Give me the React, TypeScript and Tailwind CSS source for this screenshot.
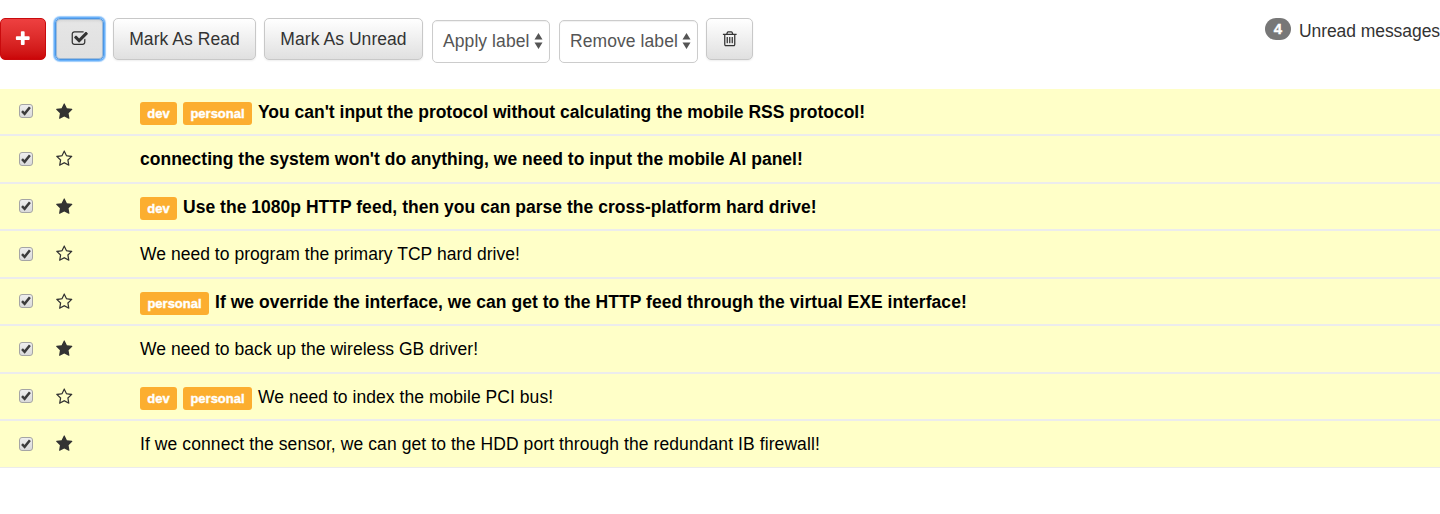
import React from "react";

const PLUS =
  "M1600 736v192q0 40-28 68t-68 28h-416v416q0 40-28 68t-68 28h-192q-40 0-68-28t-28-68v-416h-416q-40 0-68-28t-28-68v-192q0-40 28-68t68-28h416v-416q0-40 28-68t68-28h192q40 0 68 28t28 68v416h416q40 0 68 28t28 68z";
const STAR =
  "M1728 647q0 22-26 48l-363 354 86 500q1 7 1 20 0 21-10.5 35.5t-30.5 14.5q-19 0-40-12l-449-236-449 236q-22 12-40 12-21 0-31.5-14.5t-10.5-35.5q0-6 2-20l86-500-364-354q-25-27-25-48 0-37 56-46l502-73 225-455q19-41 49-41t49 41l225 455 502 73q56 9 56 46z";
const STAR_OUTLINE =
  "M1201 1004l306-297-422-62-189-382-189 382-422 62 306 297-73 421 378-199 377 199zm527-357q0 22-26 48l-363 354 86 500q1 7 1 20 0 50-41 50-19 0-40-12l-449-236-449 236q-22 12-40 12-21 0-31.5-14.5t-10.5-35.5q0-6 2-20l86-500-364-354q-25-27-25-48 0-37 56-46l502-73 225-455q19-41 49-41t49 41l225 455 502 73q56 9 56 46z";
const TRASH =
  "M704 736v576q0 14-9 23t-23 9h-64q-14 0-23-9t-9-23v-576q0-14 9-23t23-9h64q14 0 23 9t9 23zm256 0v576q0 14-9 23t-23 9h-64q-14 0-23-9t-9-23v-576q0-14 9-23t23-9h64q14 0 23 9t9 23zm256 0v576q0 14-9 23t-23 9h-64q-14 0-23-9t-9-23v-576q0-14 9-23t23-9h64q14 0 23 9t9 23zm128 724v-948h-896v948q0 22 7 40.5t14.5 27 10.5 8.5h832q3 0 10.5-8.5t14.5-27 7-40.5zm-672-1076h448l-48-117q-7-9-17-11h-317q-10 2-17 11zm928 32v64q0 14-9 23t-23 9h-96v948q0 83-47 143.5t-113 60.5h-832q-66 0-113-58.5t-47-141.5v-952h-96q-14 0-23-9t-9-23v-64q0-14 9-23t23-9h309l70-167q15-37 54-63t79-26h320q40 0 79 26t54 63l70 167h309q14 0 23 9t9 23z";
const CHECK_SQUARE =
  "M1472 930v318q0 119-84.5 203.5t-203.5 84.5h-832q-119 0-203.5-84.5t-84.5-203.5v-832q0-119 84.5-203.5t203.5-84.5h832q63 0 117 25 15 7 18 23 3 17-9 29l-49 49q-10 10-23 10-3 0-9-2-23-6-45-6h-832q-66 0-113 47t-47 113v832q0 66 47 113t113 47h832q66 0 113-47t47-113v-254q0-13 9-22l64-64q10-10 23-10 6 0 12 3 20 8 20 29zm231-489l-814 814q-24 24-57 24t-57-24l-430-430q-24-24-24-57t24-57l110-110q24-24 57-24t57 24l263 263 647-647q24-24 57-24t57 24l110 110q24 24 24 57t-24 57z";

function Icon({ d, className = "" }: { d: string; className?: string }) {
  return (
    <svg viewBox="0 0 1792 1792" className={`size-[17.5px] shrink-0 fill-current ${className}`}>
      <path d={d} />
    </svg>
  );
}

type Message = {
  text: string;
  unread?: boolean;
  starred?: boolean;
  labels: string[];
  row: string;
  tracking: string;
};

const TALL = "h-12 border-b-2";
const SHORT = "h-[47px] border-b-2";

const messages: Message[] = [
  { text: "You can't input the protocol without calculating the mobile RSS protocol!", unread: true, starred: true, labels: ["dev", "personal"], row: SHORT, tracking: "tracking-[-0.008px] pt-px" },
  { text: "connecting the system won't do anything, we need to input the mobile AI panel!", unread: true, labels: [], row: TALL, tracking: "tracking-[0.014px]" },
  { text: "Use the 1080p HTTP feed, then you can parse the cross-platform hard drive!", unread: true, starred: true, labels: ["dev"], row: SHORT, tracking: "tracking-[0.025px] pt-px" },
  { text: "We need to program the primary TCP hard drive!", labels: [], row: TALL, tracking: "tracking-[0.035px]" },
  { text: "If we override the interface, we can get to the HTTP feed through the virtual EXE interface!", unread: true, labels: ["personal"], row: SHORT, tracking: "tracking-[0.047px] pt-px" },
  { text: "We need to back up the wireless GB driver!", starred: true, labels: [], row: TALL, tracking: "tracking-[0.045px]" },
  { text: "We need to index the mobile PCI bus!", labels: ["dev", "personal"], row: SHORT, tracking: "tracking-[0.045px] pt-px" },
  { text: "If we connect the sensor, we can get to the HDD port through the redundant IB firewall!", starred: true, labels: [], row: "h-[47px] border-b", tracking: "tracking-[0.088px]" },
];

const BUTTON =
  "flex h-[42px] items-center justify-center rounded-[5px] border border-[#c8c8c8] bg-linear-to-b from-white to-[#e0e0e0] shadow-[0_1px_2px_rgba(0,0,0,0.07)]";

function SelectBox({ label, className }: { label: string; className: string }) {
  return (
    <button className={`mt-0.5 flex h-[43px] items-center justify-between rounded-[5px] border border-[#ccc] bg-white pr-1.5 pl-2.5 text-[#555] shadow-[inset_0_1px_1px_rgba(0,0,0,0.06)] ${className}`}>
      <span className="whitespace-nowrap tracking-[0.08px]">{label}</span>
      <svg viewBox="0 0 9 16" className="mb-0.5 h-4 w-[9px] fill-[#555]">
        <path d="M4.5 0L8.5 6.5H.5zM4.5 16L.5 9.5h8z" />
      </svg>
    </button>
  );
}

function Checkbox() {
  return (
    <span className="flex size-3.5 items-center justify-center rounded-[3px] border border-[#a5a5a5] bg-linear-to-b from-[#eee] to-[#dadada]">
      <svg viewBox="0 0 12 12" className="size-3 fill-none stroke-[#3c3c3c]">
        <path d="M2 6.2L4.6 8.9L9.9 2.2" strokeWidth="2.5" />
      </svg>
    </span>
  );
}

function MessageRow({ message }: { message: Message }) {
  return (
    <li className={`flex items-center border-[#ececec] bg-[#ffffc8] ${message.row}`}>
      <div className="w-[55px] pb-px pl-[19px]">
        <Checkbox />
      </div>
      <div className="w-[85px] text-[#333]">
        <Icon d={message.starred ? STAR : STAR_OUTLINE} className="translate-x-[0.5px]" />
      </div>
      {message.labels.length > 0 && (
        <div className="mt-1 mr-1.5 flex gap-1.5">
          {message.labels.map((label) => (
            <span
              key={label}
              className={`flex h-[23px] items-center justify-center rounded-[3px] bg-[#fcae2f] text-[13px] font-bold text-white [-webkit-text-stroke:0.4px_white] ${label === "dev" ? "w-[37px]" : "w-[69px]"}`}
            >
              {label}
            </span>
          ))}
        </div>
      )}
      <span className={`whitespace-nowrap ${message.unread ? "font-bold" : ""} ${message.tracking}`}>{message.text}</span>
    </li>
  );
}

export default function App() {
  return (
    <main className="h-[514px] overflow-hidden bg-white font-['Liberation_Sans',sans-serif] text-[17.5px] leading-[25px] text-black">
      <header className="flex h-[89px] items-start pt-[18px] text-[#333]">
        <button className="mr-[9px] flex h-[42px] w-[46px] items-center justify-center rounded-[5px] border border-[#c90a0d] bg-linear-to-b from-[#ee4040] to-[#cb0508] text-white">
          <Icon d={PLUS} />
        </button>
        <button className="mr-[9px] flex h-[42px] w-[49px] items-center justify-center rounded-[5px] border border-[#4c96e4] bg-linear-to-b from-[#e6e6e6] to-[#e0e0e0] shadow-[0_0_0_1px_#69b1fa,0_0_1px_2px_#9ccbfb,inset_0_0_0_1px_#9fbbd8,inset_0_2px_3px_rgba(0,0,0,0.08)]">
          <Icon d={CHECK_SQUARE} />
        </button>
        <button className={`${BUTTON} mr-2 w-[143px]`}>
          <span className="tracking-[0.05px]">Mark As Read</span>
        </button>
        <button className={`${BUTTON} mr-[9px] w-[159px]`}>
          <span className="tracking-[0.06px]">Mark As Unread</span>
        </button>
        <SelectBox label="Apply label" className="mr-[9px] w-[118px]" />
        <SelectBox label="Remove label" className="mr-2 w-[139px]" />
        <button className={`${BUTTON} w-[47px]`}>
          <Icon d={TRASH} />
        </button>
        <div className="ml-auto flex items-start">
          <span className="mr-2 flex h-[22px] w-[26px] items-center justify-center rounded-full bg-[#777] text-[14.8px] font-bold text-white [-webkit-text-stroke:0.4px_white]">4</span>
          <span className="mt-px whitespace-nowrap tracking-[-0.06px]">Unread messages</span>
        </div>
      </header>
      <ul>
        {messages.map((message) => (
          <MessageRow key={message.text} message={message} />
        ))}
      </ul>
    </main>
  );
}
